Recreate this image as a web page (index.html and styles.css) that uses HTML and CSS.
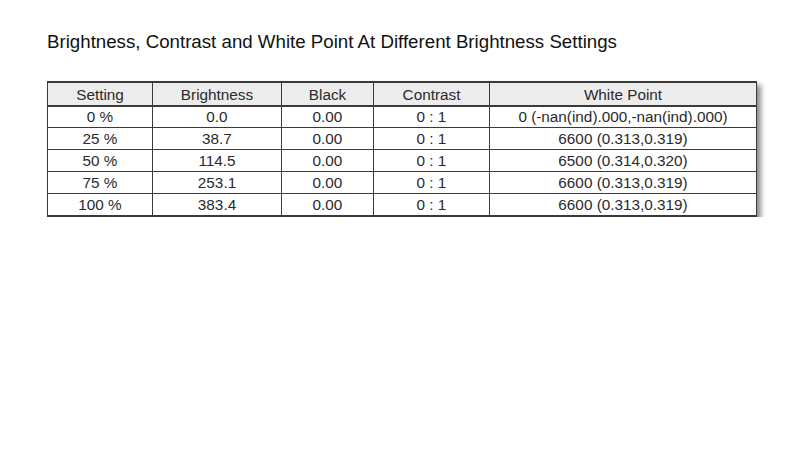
FILE: index.html
```html
<!DOCTYPE html>
<html>
<head>
<meta charset="utf-8">
<link rel="stylesheet" href="styles.css">
</head>
<body>
<main class="page">
  <h1 class="title">Brightness, Contrast and White Point At Different Brightness Settings</h1>
  <table class="data">
    <colgroup>
      <col class="c1"><col class="c2"><col class="c3"><col class="c4"><col class="c5">
    </colgroup>
    <thead>
      <tr><th>Setting</th><th>Brightness</th><th>Black</th><th>Contrast</th><th>White Point</th></tr>
    </thead>
    <tbody>
      <tr><td>0 %</td><td>0.0</td><td>0.00</td><td>0 : 1</td><td>0 (-nan(ind).000,-nan(ind).000)</td></tr>
      <tr><td>25 %</td><td>38.7</td><td>0.00</td><td>0 : 1</td><td>6600 (0.313,0.319)</td></tr>
      <tr><td>50 %</td><td>114.5</td><td>0.00</td><td>0 : 1</td><td>6500 (0.314,0.320)</td></tr>
      <tr><td>75 %</td><td>253.1</td><td>0.00</td><td>0 : 1</td><td>6600 (0.313,0.319)</td></tr>
      <tr><td>100 %</td><td>383.4</td><td>0.00</td><td>0 : 1</td><td>6600 (0.313,0.319)</td></tr>
    </tbody>
  </table>
</main>
</body>
</html>
```
FILE: styles.css
```css
html, body {
  margin: 0;
  padding: 0;
  background: #ffffff;
}
.page {
  padding: 29px 0 0 47px;
  font-family: "Liberation Sans", Arial, sans-serif;
  color: #1a1a1a;
}
.title {
  margin: 0 0 27px 0;
  font-size: 18.7px;
  font-weight: normal;
  line-height: 25px;
  color: #111;
}
.data {
  border-collapse: collapse;
  table-layout: fixed;
  width: 709px;
  font-size: 15.3px;
  color: #2a2a2a;
  box-shadow: 4px 4px 5px rgba(0, 0, 0, 0.45);
}
.c1 { width: 105px; }
.c2 { width: 129px; }
.c3 { width: 92px; }
.c4 { width: 116px; }
.c5 { width: 267px; }
.data th, .data td {
  border: 1px solid #3a3a3a;
  text-align: center;
  padding: 0;
  height: 21px;
  line-height: 21px;
  font-weight: normal;
}
.data th {
  background: #ececec;
  height: 22px;
  border-top: 2px solid #3a3a3a;
  border-bottom: 2px solid #3a3a3a;
}
.data tbody tr:first-child td {
  height: 20px;
  line-height: 20px;
}
.data tbody tr:last-child td {
  border-bottom: 2px solid #3a3a3a;
}
```
